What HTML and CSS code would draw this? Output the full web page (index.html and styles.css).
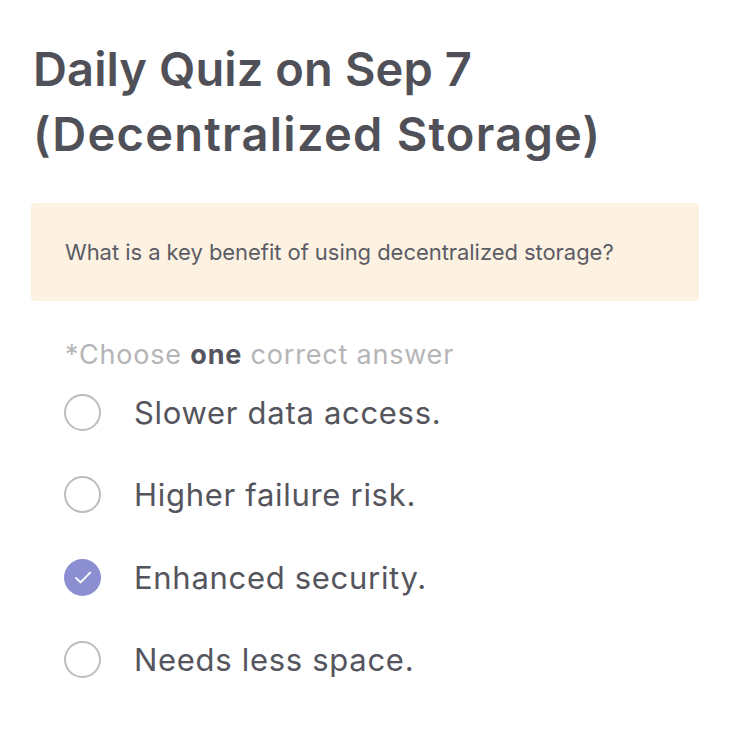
FILE: index.html
```html
<!DOCTYPE html>
<html>
<head>
<meta charset="utf-8">
<link rel="stylesheet" href="styles.css">
</head>
<body>
<div class="page">
  <h1 class="title"><span class="line1">Daily Quiz on Sep 7</span><br><span class="line2">(Decentralized Storage)</span></h1>
  <div class="question">What is a key benefit of using decentralized storage?</div>
  <div class="hint">*Choose <b>one</b> correct answer</div>
  <ul class="options">
    <li class="option"><span class="radio"></span><span class="label">Slower data access.</span></li>
    <li class="option"><span class="radio"></span><span class="label">Higher failure risk.</span></li>
    <li class="option"><span class="radio checked"><svg viewBox="0 0 24 24" width="26" height="26"><path d="M5.5 12.8l4.2 4.2L18.8 7.8" fill="none" stroke="#fff" stroke-width="1.7" stroke-linecap="round" stroke-linejoin="round"/></svg></span><span class="label">Enhanced security.</span></li>
    <li class="option"><span class="radio"></span><span class="label">Needs less space.</span></li>
  </ul>
</div>
</body>
</html>
```

FILE: styles.css
```css
html, body {
  margin: 0;
  padding: 0;
  background: #ffffff;
}
body {
  font-family: Inter, "Noto Sans", sans-serif;
  color: #515159;
}
.page {
  padding: 36px 31px 0 31px;
}
.title {
  margin: 0 0 0 2px;
  font-size: 47px;
  line-height: 65px;
  font-weight: 600;
  letter-spacing: 0.1px;
  color: #505058;
}
.line2 {
  letter-spacing: 1.25px;
}
.question {
  margin-top: 37px;
  background: #fdf2e1;
  border-radius: 4px;
  height: 98px;
  box-sizing: border-box;
  padding: 0 34px;
  display: flex;
  align-items: center;
  font-size: 22px;
  color: #5b5c66;
  letter-spacing: -0.05px;
}
.hint {
  margin-top: 38px;
  padding-left: 34px;
  font-size: 27px;
  line-height: 32px;
  color: #b5b5b8;
  letter-spacing: 0.8px;
}
.hint b {
  font-weight: 700;
  color: #555560;
}
.options {
  list-style: none;
  margin: 0;
  padding: 0 0 0 33px;
}
.option {
  display: flex;
  align-items: center;
  height: 82.5px;
}
.radio {
  width: 37px;
  height: 37px;
  box-sizing: border-box;
  border: 2px solid #bdbdbd;
  border-radius: 50%;
  display: flex;
  align-items: center;
  justify-content: center;
  flex: none;
}
.radio.checked {
  border: none;
  background: #8b8ed0;
}
.label {
  margin-left: 33px;
  font-size: 31px;
  color: #55555d;
  letter-spacing: 0.7px;
}
```
